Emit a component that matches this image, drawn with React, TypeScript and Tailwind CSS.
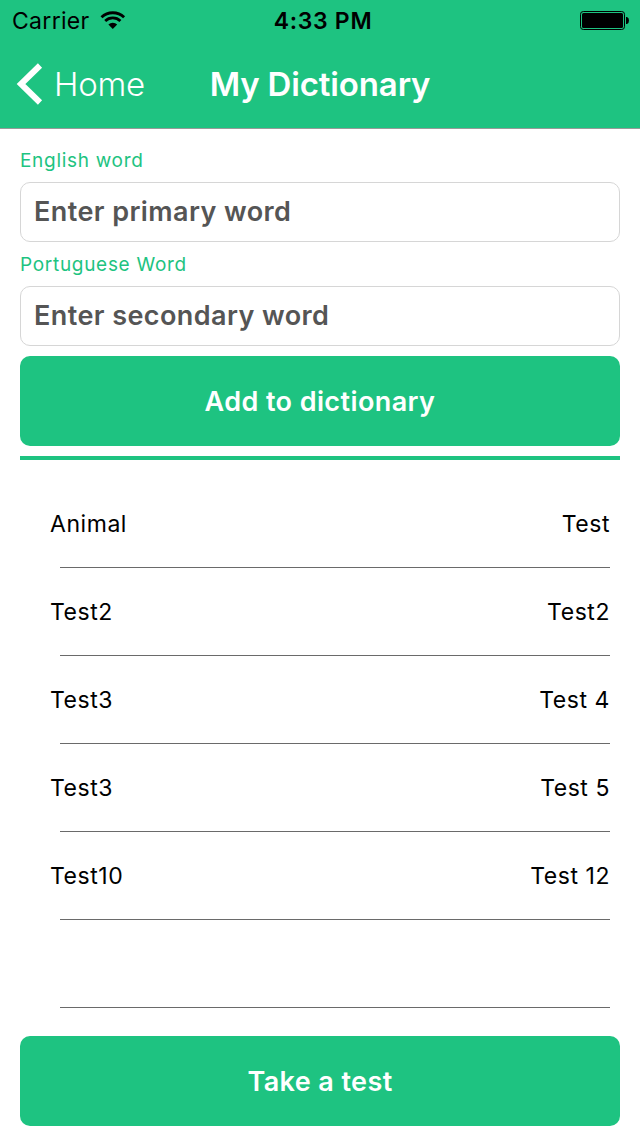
import React from "react";

interface Entry {
  primary: string;
  secondary: string;
}

const entries: Entry[] = [
  { primary: "Animal", secondary: "Test" },
  { primary: "Test2", secondary: "Test2" },
  { primary: "Test3", secondary: "Test 4" },
  { primary: "Test3", secondary: "Test 5" },
  { primary: "Test10", secondary: "Test 12" },
  { primary: "", secondary: "" },
];

function WifiIcon() {
  return (
    <svg width="26" height="19" viewBox="0 0 26 19" fill="none" stroke="#000" className="ml-[10px]">
      <path d="M1.500 6.200a16.500 16.500 0 0 1 22.600 0" strokeWidth="2.9" />
      <path d="M5.200 10a10.900 10.900 0 0 1 15.200 0" strokeWidth="2.8" />
      <path d="M8.400 13.400a6.400 6.400 0 0 1 8.800 0L12.800 18Z" fill="#000" stroke="none" />
    </svg>
  );
}

function BatteryIcon() {
  return (
    <svg width="50" height="19" viewBox="0 0 50 19">
      <rect x="0.5" y="0.5" width="44" height="18" rx="2.8" fill="none" stroke="#000" />
      <rect x="2" y="2" width="41" height="15" rx="1.5" fill="#000" />
      <path d="M46 6h1q2 .6 2 3.500t-2 3.500h-1z" fill="#000" />
    </svg>
  );
}

function Header() {
  return (
    <header className="h-[129px] border-b border-[#979b99] bg-[#1ec381]">
      <div className="grid h-10 grid-cols-3 items-center pl-3 pr-[10px] text-black">
        <div className="flex items-center">
          <span className="pt-px text-[23px] leading-10 tracking-[0.3px]">Carrier</span>
          <WifiIcon />
        </div>
        <span className="pl-1 pt-px text-center text-[23px] font-semibold leading-10 tracking-[0.7px]">4:33 PM</span>
        <div className="flex justify-end">
          <BatteryIcon />
        </div>
      </div>
      <nav className="grid h-[88px] grid-cols-[1fr_auto_1fr] items-center pl-4 pr-4 text-white">
        <button className="flex items-center">
          <svg width="27" height="42" viewBox="0 0 27 42" fill="none" stroke="#fff" strokeWidth="6">
            <path d="M24 2.500L5 21L24 39.500" />
          </svg>
          <span className="ml-[11px] text-[33px] font-light leading-[40px] tracking-[-0.3px]">Home</span>
        </button>
        <h1 className="text-[33px] font-semibold leading-[40px] tracking-[-0.15px]">My Dictionary</h1>
      </nav>
    </header>
  );
}

function Field({ label, placeholder }: { label: string; placeholder: string }) {
  return (
    <label className="flex flex-col gap-[10px]">
      <span className="h-6 pt-px text-[19px] leading-6 tracking-[0.7px] text-[#1ec381]">{label}</span>
      <input
        className="h-[60px] rounded-[10px] border border-[#d6d6d6] px-[13px] pb-0.5 text-[27px] font-semibold tracking-[0.42px] text-[#555] outline-none placeholder:text-[#555] placeholder:opacity-100"
        placeholder={placeholder}
      />
    </label>
  );
}

function ActionButton({ children }: { children: React.ReactNode }) {
  return (
    <button className="h-[90px] w-full rounded-[10px] bg-[#1ec381] pt-0.5 text-[27px] font-semibold tracking-[0.4px] text-white">
      {children}
    </button>
  );
}

export default function App() {
  return (
    <div className="flex h-[1136px] w-[640px] flex-col bg-white font-['Inter',sans-serif]">
      <Header />
      <main className="flex flex-1 flex-col px-5 pb-[10px] pt-[19px]">
        <div className="flex flex-col gap-[10px]">
          <Field label="English word" placeholder="Enter primary word" />
          <Field label="Portuguese Word" placeholder="Enter secondary word" />
          <ActionButton>Add to dictionary</ActionButton>
          <div className="h-1 bg-[#1ec381]" />
        </div>
        <ul className="mt-5 flex-1 pl-[30px] pr-[10px]">
          {entries.map((entry, index) => (
            <li key={index} className="flex h-[88px] flex-col text-[23px] tracking-[0.55px] text-black">
              <div className="flex flex-1 items-center justify-between pt-0.5">
                <span>{entry.primary}</span>
                <span>{entry.secondary}</span>
              </div>
              <div className="ml-[10px] h-px bg-[#6a6a6a]" />
            </li>
          ))}
        </ul>
        <ActionButton>Take a test</ActionButton>
      </main>
    </div>
  );
}
